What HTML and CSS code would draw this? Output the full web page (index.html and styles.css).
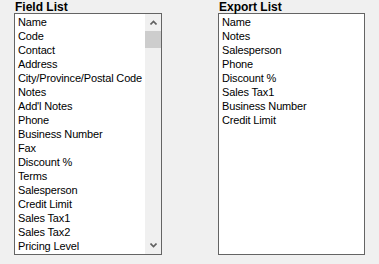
FILE: index.html
```html
<!DOCTYPE html>
<html lang="en">

<head>
    <meta charset="UTF-8">
    <title>Export Fields</title>
    <link rel="stylesheet" href="styles.css">
</head>

<body>
    <div class="main">
        <div class="column column-field">
            <div class="label">Field List</div>
            <div class="listbox">
                <ul class="items">
                    <li>Name</li>
                    <li>Code</li>
                    <li>Contact</li>
                    <li>Address</li>
                    <li>City/Province/Postal Code</li>
                    <li>Notes</li>
                    <li>Add'l Notes</li>
                    <li>Phone</li>
                    <li>Business Number</li>
                    <li>Fax</li>
                    <li>Discount %</li>
                    <li>Terms</li>
                    <li>Salesperson</li>
                    <li>Credit Limit</li>
                    <li>Sales Tax1</li>
                    <li>Sales Tax2</li>
                    <li>Pricing Level</li>
                </ul>
                <div class="scrollbar">
                    <div class="arrow">
                        <svg width="7" height="5" viewBox="0 0 7 5"><path d="M0.5 4.5 L3.5 1.5 L6.5 4.5" fill="none" stroke="#606060" stroke-width="1.6"/></svg>
                    </div>
                    <div class="thumb"></div>
                    <div class="track"></div>
                    <div class="arrow">
                        <svg width="7" height="5" viewBox="0 0 7 5"><path d="M0.5 0.5 L3.5 3.5 L6.5 0.5" fill="none" stroke="#606060" stroke-width="1.6"/></svg>
                    </div>
                </div>
            </div>
        </div>
        <div class="column column-export">
            <div class="label">Export List</div>
            <div class="listbox">
                <ul class="items">
                    <li>Name</li>
                    <li>Notes</li>
                    <li>Salesperson</li>
                    <li>Phone</li>
                    <li>Discount %</li>
                    <li>Sales Tax1</li>
                    <li>Business Number</li>
                    <li>Credit Limit</li>
                </ul>
            </div>
        </div>
    </div>
</body>

</html>
```

FILE: styles.css
```css
body {
    margin: 0;
    background-color: #f0f0f0;
    font-family: 'Liberation Sans', Arial, sans-serif;
    color: #000;
}
.main {
    display: flex;
    gap: 56px;
    padding-left: 14px;
}
.column-field {
    width: 148px;
}
.column-export {
    width: 147px;
}
.label {
    height: 12px;
    padding-top: 1px;
    padding-left: 1px;
    font-size: 12px;
    font-weight: bold;
    line-height: 12px;
}
.listbox {
    display: flex;
    height: 240px;
    border: 1px solid #646464;
    background-color: #fff;
}
.items {
    flex: 1;
    list-style: none;
    margin: 0;
    padding: 1px 0 0 3px;
    font-size: 11px;
    line-height: 14px;
    letter-spacing: -0.15px;
    white-space: nowrap;
    overflow: hidden;
}
.scrollbar {
    width: 16px;
    display: flex;
    flex-direction: column;
    background-color: #f0f0f0;
}
.arrow {
    height: 17px;
    display: flex;
    align-items: center;
    justify-content: center;
}
.thumb {
    height: 17px;
    background-color: #cdcdcd;
}
.track {
    flex: 1;
}
```
